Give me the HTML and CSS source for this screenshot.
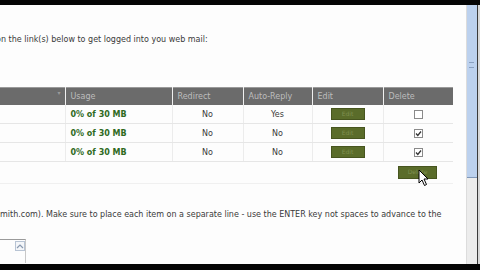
FILE: index.html
```html
<!DOCTYPE html>
<html>
<head>
<meta charset="utf-8">
<link rel="stylesheet" href="styles.css">
</head>
<body>
<div class="screen">
  <div class="topbar"></div>
  <div class="middle">
    <div class="content">
      <p class="intro">on the link(s) below to get logged into you web mail:</p>
      <table class="grid">
        <colgroup>
          <col class="c1"><col class="c2"><col class="c3"><col class="c4"><col class="c5"><col class="c6">
        </colgroup>
        <thead>
          <tr>
            <th class="first"><span class="sort">&#9662;</span></th>
            <th>Usage</th>
            <th>Redirect</th>
            <th>Auto-Reply</th>
            <th>Edit</th>
            <th>Delete</th>
          </tr>
        </thead>
        <tbody>
          <tr>
            <td></td>
            <td class="usage">0% of 30 MB</td>
            <td class="ctr">No</td>
            <td class="ctr">Yes</td>
            <td class="ctr"><span class="btn">Edit</span></td>
            <td class="ctr"><span class="chk"></span></td>
          </tr>
          <tr>
            <td></td>
            <td class="usage">0% of 30 MB</td>
            <td class="ctr">No</td>
            <td class="ctr">No</td>
            <td class="ctr"><span class="btn">Edit</span></td>
            <td class="ctr"><span class="chk"><svg viewBox="0 0 9 9" width="9" height="9"><path d="M2 4.5 L3.8 6.5 L7 2.5" fill="none" stroke="#333" stroke-width="1.3"/></svg></span></td>
          </tr>
          <tr>
            <td></td>
            <td class="usage">0% of 30 MB</td>
            <td class="ctr">No</td>
            <td class="ctr">No</td>
            <td class="ctr"><span class="btn">Edit</span></td>
            <td class="ctr"><span class="chk"><svg viewBox="0 0 9 9" width="9" height="9"><path d="M2 4.5 L3.8 6.5 L7 2.5" fill="none" stroke="#333" stroke-width="1.3"/></svg></span></td>
          </tr>
        </tbody>
      </table>
      <div class="actions">
        <span class="btn del">Delete</span>
        <svg class="cursor" viewBox="0 0 12 18" width="12" height="18"><path d="M1 1 L1 14 L4 11 L6.5 16.5 L8.5 15.5 L6 10 L10 10 Z" fill="#fff" stroke="#000" stroke-width="1"/></svg>
      </div>
      <p class="note">mith.com). Make sure to place each item on a separate line - use the ENTER key not spaces to advance to the</p>
      <div class="textarea"><span class="up"><svg viewBox="0 0 8 6" width="8" height="6"><path d="M1 5 L4 2 L7 5" fill="none" stroke="#8a9ab0" stroke-width="1.2"/></svg></span></div>
    </div>
    <div class="scroll">
      <div class="thumb"><span class="grip"></span></div>
      <div class="track"></div>
    </div>
    <div class="edge"></div>
  </div>
  <div class="bottombar"></div>
</div>
</body>
</html>
```
FILE: styles.css
```css
html, body {
  margin: 0;
  padding: 0;
}
body {
  width: 480px;
  height: 270px;
  overflow: hidden;
  background: #000;
  font-family: "DejaVu Sans", Verdana, sans-serif;
}
.screen {
  width: 480px;
  height: 270px;
  display: grid;
  grid-template-rows: 5px 259px 6px;
}
.topbar {
  background: #050505;
}
.bottombar {
  background: #050505;
}
.middle {
  display: grid;
  grid-template-columns: 466px 11px 3px;
  background: #fdfdfd;
  overflow: hidden;
  height: 259px;
}
.content {
  overflow: hidden;
  position: relative;
  height: 259px;
}
.intro {
  margin: 30px 0 0 -4px;
  font-size: 8px;
  color: #3a3a3a;
  white-space: nowrap;
  line-height: 10px;
}
.grid {
  margin-top: 42px;
  border-collapse: collapse;
  table-layout: fixed;
  width: 453px;
  font-size: 8px;
  border-top: 1px solid #9a9a9a;
}
.c1 { width: 65px; }
.c2 { width: 107px; }
.c3 { width: 71px; }
.c4 { width: 69px; }
.c5 { width: 71px; }
.c6 { width: 70px; }
.grid th {
  background: #6b6b6b;
  color: #bdbdbd;
  font-weight: normal;
  text-align: left;
  height: 17px;
  padding: 0 0 0 5px;
  border-left: 1px solid #f0f0f0;
  font-size: 8px;
}
.grid th.first {
  border-left: none;
  text-align: right;
  padding-right: 4px;
  vertical-align: top;
}
.sort {
  color: #9a9a9a;
  font-size: 6px;
}
.grid td {
  height: 18px;
  border-bottom: 1px solid #e6e6e6;
  border-left: 1px solid #ececec;
  color: #3a3a3a;
  padding: 0;
}
.grid td:first-child {
  border-left: none;
}
.grid td.usage {
  color: #2f6a22;
  font-weight: bold;
  padding-left: 5px;
}
.grid td.ctr {
  text-align: center;
}
.btn {
  display: inline-block;
  width: 34px;
  height: 12px;
  background: #5a6c2a;
  border: 1px solid #47551f;
  box-sizing: border-box;
  color: #7f8f50;
  font-size: 6px;
  line-height: 10px;
  text-align: center;
  vertical-align: middle;
}
.chk {
  display: inline-block;
  width: 9px;
  height: 9px;
  border: 1px solid #8a8a8a;
  background: #fff;
  box-sizing: border-box;
  vertical-align: middle;
  position: relative;
}
.chk svg {
  position: absolute;
  left: -1px;
  top: -1px;
}
.actions {
  height: 22px;
  width: 453px;
  display: flex;
  justify-content: flex-end;
  align-items: flex-start;
  padding-top: 4px;
  box-sizing: border-box;
  border-bottom: 1px solid #f0f0f0;
  position: relative;
}
.btn.del {
  width: 39px;
  height: 13px;
  margin-right: 16px;
}
.cursor {
  position: absolute;
  left: 418px;
  top: 7px;
}
.note {
  margin: 26px 0 0 0;
  font-size: 8px;
  color: #3a3a3a;
  white-space: nowrap;
  line-height: 10px;
}
.textarea {
  margin-top: 19px;
  width: 26px;
  height: 24px;
  border-top: 1px solid #9a9a9a;
  border-right: 1px solid #c8c8c8;
  box-sizing: border-box;
  display: flex;
  justify-content: flex-end;
  padding-top: 1px;
}
.up {
  width: 10px;
  height: 10px;
  border: 1px solid #b8c4d4;
  box-sizing: border-box;
  background: #f4f6f9;
  display: flex;
  align-items: center;
  justify-content: center;
}
.scroll {
  display: grid;
  grid-template-rows: 173px 1fr;
  border-left: 1px solid #dcdcdc;
  height: 259px;
}
.thumb {
  background: #bcd1ee;
  border-bottom: 1px solid #7f97b8;
  position: relative;
}
.track {
  background: #ececec;
}
.grip {
  position: absolute;
  left: 2px;
  top: 57px;
  width: 5px;
  height: 6px;
  border-top: 1px solid #8aa0c0;
  border-bottom: 1px solid #8aa0c0;
  box-sizing: border-box;
}
.edge {
  background: #d8d8d8;
  border-left: 1px solid #3a3a3a;
  height: 259px;
}
```
